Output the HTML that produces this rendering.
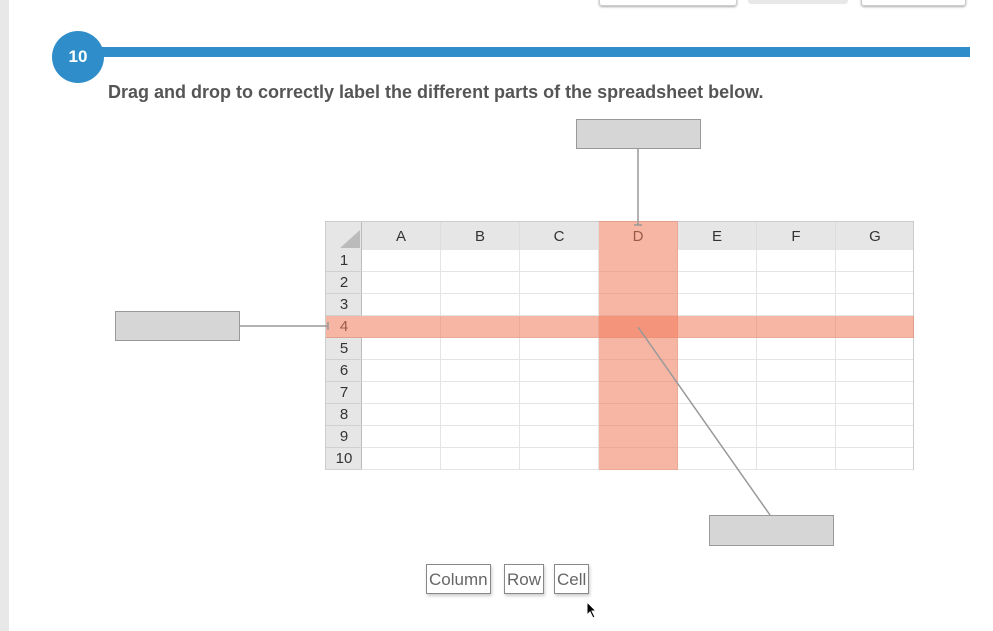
<html><head><style>
body{margin:0;width:993px;height:631px;background:#fff;position:relative;overflow:hidden;font-family:"Liberation Sans",sans-serif}
.a{position:absolute}
.lb{position:absolute;background:#d6d6d6;border:1.5px solid #999;box-sizing:border-box}
.ch{position:absolute;top:0;height:28px;line-height:30px;text-align:center;font-size:15px;color:#333;border-right:1px solid #ddd;box-sizing:border-box}
.rh{position:absolute;left:0;width:36px;height:22px;line-height:22px;text-align:center;font-size:15px;color:#333;border-bottom:1px solid #d0d0d0;box-sizing:border-box}
.w{position:absolute;border:1px solid #888;background:#fff;color:#666;font-size:17px;height:30px;line-height:30px;padding:0 2px;box-sizing:border-box;box-shadow:1px 2px 3px #ccc}
</style></head><body>
<div class="a" style="left:0;top:0;width:9px;height:631px;background:#e8e8e8"></div>
<div class="a" style="left:599px;top:-4px;width:136px;height:8px;border:1px solid #ccc;border-radius:3px;box-shadow:0 1px 2px #aaa"></div>
<div class="a" style="left:748px;top:-4px;width:100px;height:8px;background:#e8e8e8;border-radius:3px"></div>
<div class="a" style="left:861px;top:-4px;width:103px;height:8px;border:1px solid #ccc;border-radius:3px;box-shadow:0 1px 2px #aaa"></div>
<div class="a" style="left:90px;top:47px;width:880px;height:10px;background:#2f8ec9"></div>
<div class="a" style="left:52px;top:31px;width:52px;height:52px;border-radius:50%;background:#2f8ec9;color:#fff;font-weight:bold;font-size:17px;line-height:52px;text-align:center">10</div>
<div class="a" style="left:108px;top:82px;font-size:18px;font-weight:bold;color:#555;letter-spacing:0">Drag and drop to correctly label the different parts of the spreadsheet below.</div>
<div class="a" style="left:325px;top:221px;width:589px;height:249px;border:1px solid #ccc;box-sizing:border-box;background:#fff">
 <div class="a" style="left:0;top:0;width:587px;height:28px;background:#e6e6e6"></div>
 <div class="a" style="left:0;top:0;width:36px;height:247px;background:#e6e6e6;border-right:1px solid #bbb;box-sizing:border-box"></div>
 <svg class="a" style="left:14px;top:8px" width="20" height="18"><polygon points="20,0 20,18 0,18" fill="#bbb"/></svg>
 <div class="ch" style="left:36px;width:79px">A</div><div class="ch" style="left:115px;width:79px">B</div><div class="ch" style="left:194px;width:79px">C</div><div class="ch" style="left:273px;width:79px;background:#fff">D</div><div class="ch" style="left:352px;width:79px">E</div><div class="ch" style="left:431px;width:79px">F</div><div class="ch" style="left:510px;width:78px;border:0">G</div>
 <div class="a" style="left:36px;top:28px;width:551px;height:220px;background:
 repeating-linear-gradient(to bottom,transparent 0 21px,#e4e4e4 21px 22px),repeating-linear-gradient(to right,transparent 0 78px,#e4e4e4 78px 79px)"></div>
 <div class="rh" style="top:28px">1</div><div class="rh" style="top:50px">2</div><div class="rh" style="top:72px">3</div><div class="rh" style="top:94px;background:#fff">4</div><div class="rh" style="top:116px">5</div><div class="rh" style="top:138px">6</div><div class="rh" style="top:160px">7</div><div class="rh" style="top:182px">8</div><div class="rh" style="top:204px">9</div><div class="rh" style="top:226px">10</div>
 <div class="a" style="left:273px;top:-1px;width:79px;height:249px;background:rgba(240,120,90,.55)"></div>
 <div class="a" style="left:0;top:94px;width:588px;height:22px;background:rgba(240,120,90,.55)"></div>
</div>
<svg class="a" style="left:0;top:0" width="993" height="631"><g stroke="#999" stroke-width="1.5" fill="none">
<line x1="638" y1="148" x2="638" y2="225"/><line x1="634" y1="225" x2="642" y2="225"/>
<line x1="239" y1="326" x2="328" y2="326"/><line x1="328" y1="322" x2="328" y2="330"/>
<line x1="638" y1="327" x2="770" y2="515"/></g></svg>
<div class="lb" style="left:576px;top:119px;width:125px;height:30px"></div>
<div class="lb" style="left:115px;top:311px;width:125px;height:30px"></div>
<div class="lb" style="left:709px;top:515px;width:125px;height:31px"></div>
<div class="w" style="left:426px;top:564px">Column</div>
<div class="w" style="left:504px;top:564px">Row</div>
<div class="w" style="left:554px;top:564px">Cell</div>
<svg class="a" style="left:586px;top:601px" width="12" height="18"><path d="M1 1 L1 14 L4 11 L7 17 L9 16 L6 10 L10 10 Z" fill="#000" stroke="#fff" stroke-width="1"/></svg>
</body></html>
